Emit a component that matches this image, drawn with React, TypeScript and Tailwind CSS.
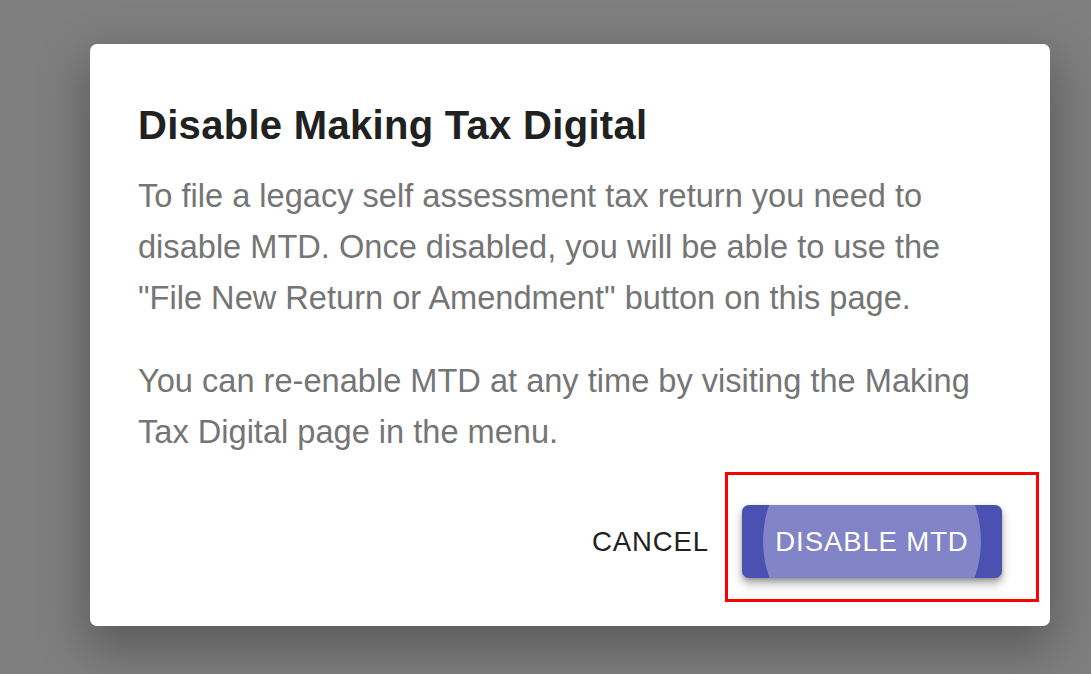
import React from "react";

const font = { fontFamily: '"Liberation Sans", Arial, sans-serif' };

const App = () => {
  return (
    <div
      className="w-[1091px] h-[674px] bg-[#7f7f7f] pl-[90px] pt-[44px] overflow-hidden"
      style={font}
    >
      <div className="w-[960px] h-[582px] bg-white rounded-[7px] shadow-[0_18px_50px_4px_rgba(0,0,0,0.3)] flex flex-col px-[48px] pt-[58px] pb-[48px]">
        <h2 className="text-[40px] leading-[46px] font-bold text-[#212121] tracking-[0.3px]">
          Disable Making Tax Digital
        </h2>
        <div className="mt-[22px] text-[32.6px] leading-[51px] text-[#757575]">
          <p>
            To file a legacy self assessment tax return you need to disable
            MTD. Once disabled, you will be able to use the "File New Return or
            Amendment" button on this page.
          </p>
          <p className="mt-[32px]">
            You can re-enable MTD at any time by visiting the Making Tax
            Digital page in the menu.
          </p>
        </div>

        <div className="mt-auto flex justify-end items-center gap-[16px]">
          <button className="h-[73px] px-[17px] text-[27.5px] tracking-[0.9px] text-[#212121] uppercase">
            Cancel
          </button>
          <div className="relative">
            <button className="relative overflow-hidden w-[260px] h-[73px] rounded-[7px] bg-[#4b51b0] text-white text-[27.5px] tracking-[0.9px] shadow-[0_6px_10px_rgba(0,0,0,0.3),0_2px_4px_rgba(0,0,0,0.2)]">
              <span className="absolute left-[21px] top-[-73px] w-[218px] h-[218px] rounded-full bg-[#8184c6]" />
              <span className="relative">DISABLE MTD</span>
            </button>
            <div className="absolute left-[-17px] top-[-33px] w-[314px] h-[130px] border-[3px] border-[#ff0000] pointer-events-none" />
          </div>
        </div>
      </div>
    </div>
  );
};

export default App;
